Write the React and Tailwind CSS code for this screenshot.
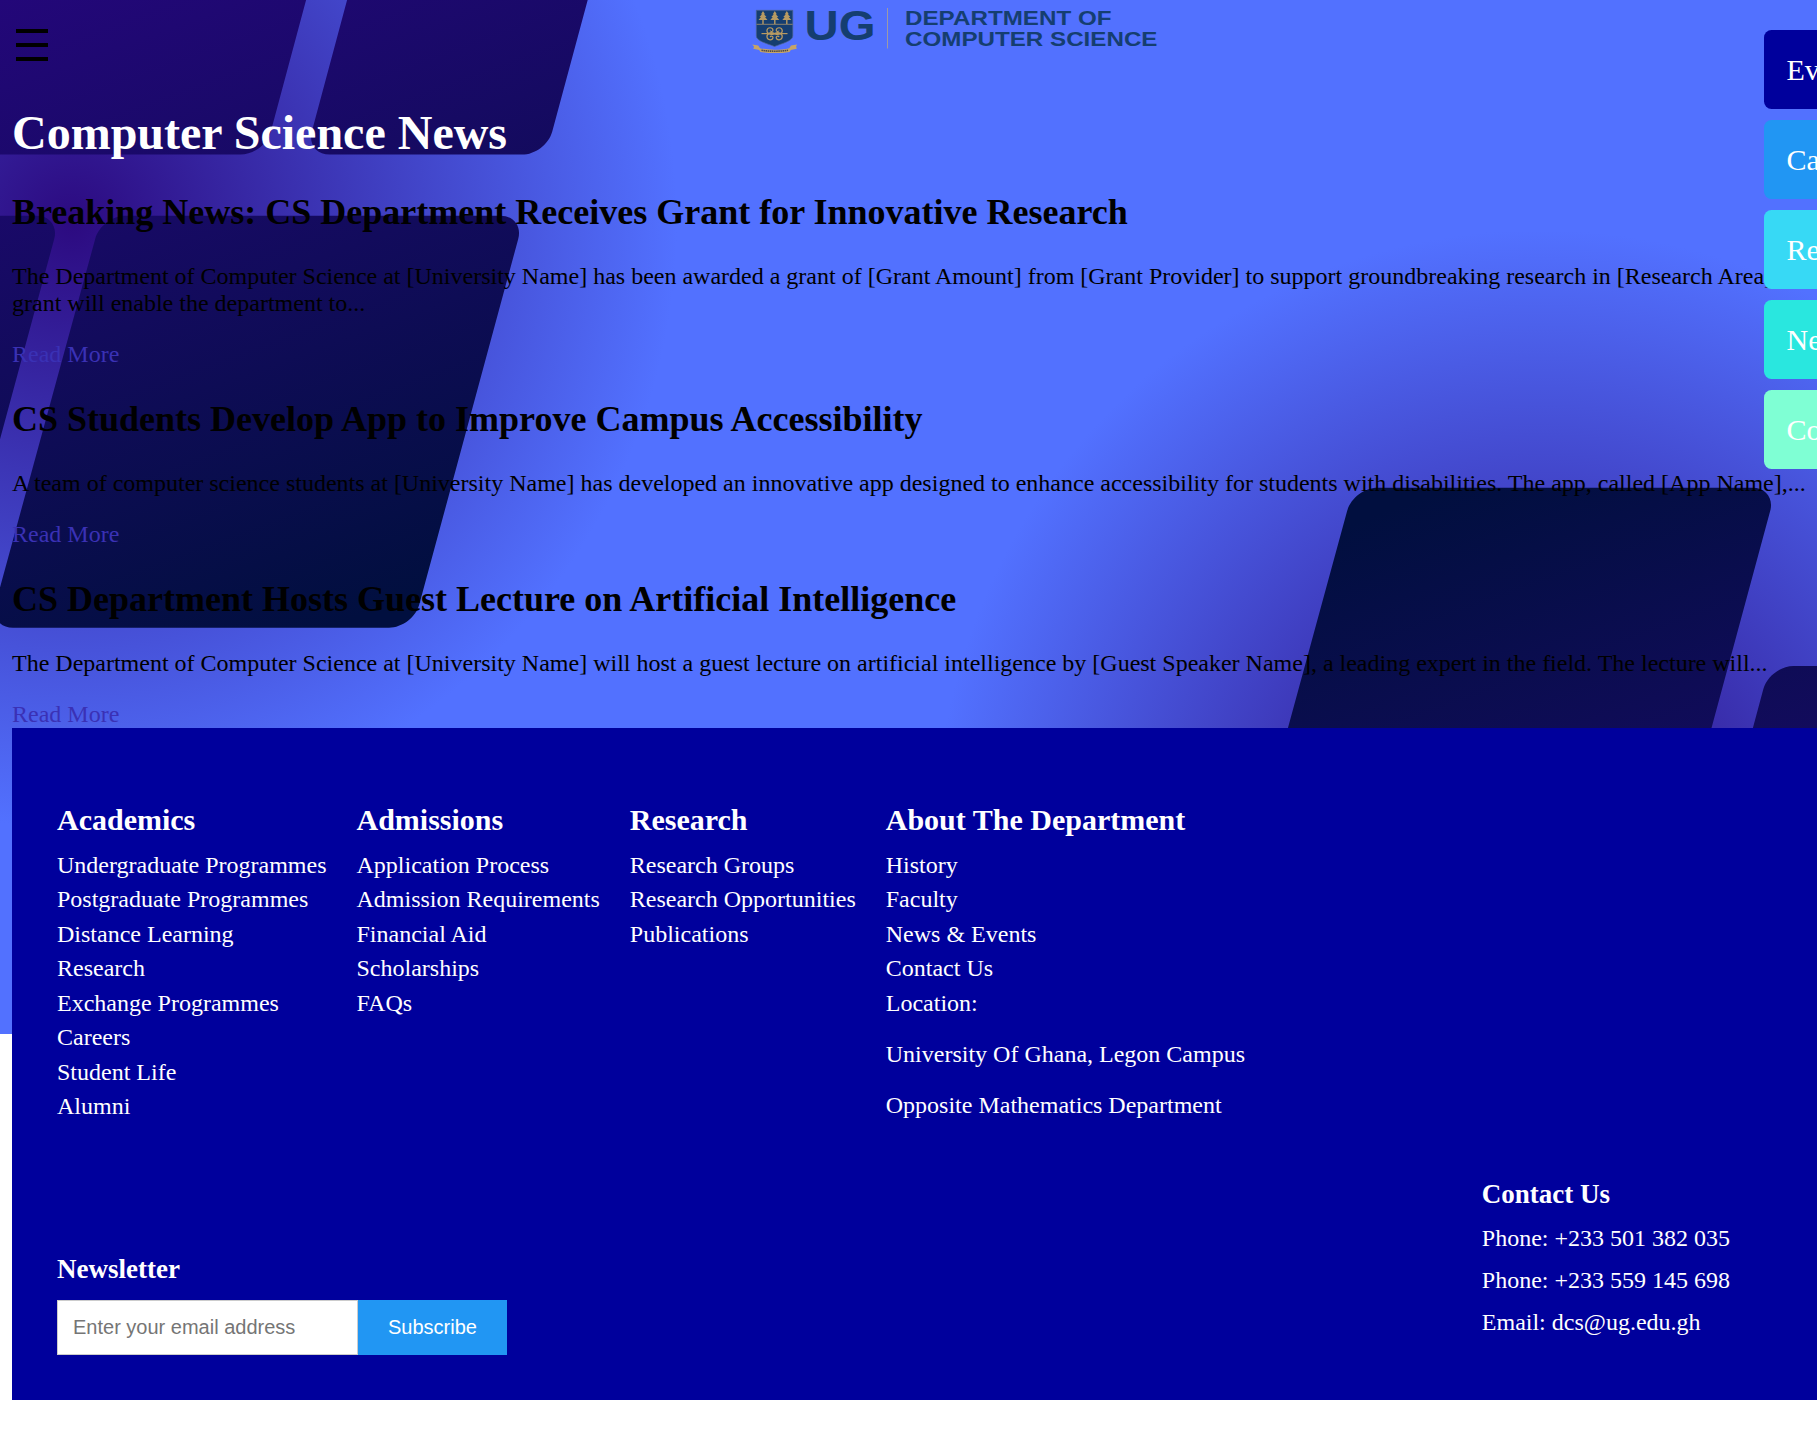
import React from 'react';

const NEWS = [
  {
    title: 'Breaking News: CS Department Receives Grant for Innovative Research',
    lines: [
      'The Department of Computer Science at [University Name] has been awarded a grant of [Grant Amount] from [Grant Provider] to support groundbreaking research in [Research Area].',
      'grant will enable the department to...',
    ],
  },
  {
    title: 'CS Students Develop App to Improve Campus Accessibility',
    lines: [
      'A team of computer science students at [University Name] has developed an innovative app designed to enhance accessibility for students with disabilities. The app, called [App Name],...',
    ],
  },
  {
    title: 'CS Department Hosts Guest Lecture on Artificial Intelligence',
    lines: [
      'The Department of Computer Science at [University Name] will host a guest lecture on artificial intelligence by [Guest Speaker Name], a leading expert in the field. The lecture will...',
    ],
  },
];

const COLUMNS = [
  {
    title: 'Academics',
    links: ['Undergraduate Programmes', 'Postgraduate Programmes', 'Distance Learning', 'Research', 'Exchange Programmes', 'Careers', 'Student Life', 'Alumni'],
  },
  { title: 'Admissions', links: ['Application Process', 'Admission Requirements', 'Financial Aid', 'Scholarships', 'FAQs'] },
  { title: 'Research', links: ['Research Groups', 'Research Opportunities', 'Publications'] },
  {
    title: 'About The Department',
    links: ['History', 'Faculty', 'News & Events', 'Contact Us', 'Location:'],
    notes: ['University Of Ghana, Legon Campus', 'Opposite Mathematics Department'],
  },
];

const TABS = [
  { label: 'Ev', color: 'bg-[#00009c]' },
  { label: 'Ca', color: 'bg-[#2196f3]' },
  { label: 'Re', color: 'bg-[#37d9f5]' },
  { label: 'Ne', color: 'bg-[#29e7df]' },
  { label: 'Co', color: 'bg-[#7fffd4]' },
];

// Closed path through the points; every corner is eased over the same length t on both sides.
function roundedPath(points, t = 24) {
  const n = points.length;
  const k = t * 0.448;
  const parts = points.map(([x, y], i) => {
    const [px, py] = points[(i + n - 1) % n];
    const [nx, ny] = points[(i + 1) % n];
    const la = Math.hypot(px - x, py - y);
    const lb = Math.hypot(nx - x, ny - y);
    const ax = (px - x) / la, ay = (py - y) / la;
    const bx = (nx - x) / lb, by = (ny - y) / lb;
    return `${i ? 'L' : 'M'}${x + ax * t} ${y + ay * t}C${x + ax * k} ${y + ay * k} ${x + bx * k} ${y + by * k} ${x + bx * t} ${y + by * t}`;
  });
  return parts.join('') + 'Z';
}

const PANELS = [
  [[-200, -268], [378, -268], [264.6, 154.6], [-300, 154.6]],
  [[419, -268], [660, -268], [546, 154.6], [305.6, 154.6]],
  [[101.5, 215.8], [524.5, 215.8], [413, 627.7], [-11, 627.7]],
  [[-300, 215.8], [60.5, 215.8], [-51, 627.7], [-410, 627.7]],
  [[1353.5, 487.7], [1776.5, 487.7], [1665, 900], [1241, 900]],
  [[1769.5, 666], [2190, 666], [2080, 1078], [1659, 1078]],
];

function Backdrop() {
  return (
    <svg className="absolute top-0 left-0" width="1817" height="1034" viewBox="0 0 1817 1034" aria-hidden="true">
      <defs>
        <radialGradient id="glowA" gradientUnits="userSpaceOnUse" cx="72" cy="222" r="605">
          <stop offset="0" stopColor="#2c0a80" />
          <stop offset="1" stopColor="#5271ff" />
        </radialGradient>
        <radialGradient id="glowB" gradientUnits="userSpaceOnUse" cx="1540" cy="834" r="604">
          <stop offset="0" stopColor="#2c0a80" />
          <stop offset="1" stopColor="#5271ff" />
        </radialGradient>
        <linearGradient id="panelA" gradientUnits="userSpaceOnUse" x1="0" y1="0" x2="240" y2="660">
          <stop offset="0" stopColor="#230779" />
          <stop offset="1" stopColor="#010f3f" />
        </linearGradient>
        <linearGradient id="panelB" gradientUnits="userSpaceOnUse" x1="1390" y1="510" x2="1630" y2="1170">
          <stop offset="0" stopColor="#010f3f" />
          <stop offset="1" stopColor="#230779" />
        </linearGradient>
      </defs>
      <rect width="1817" height="1034" fill="#5271ff" />
      <rect width="900" height="1034" fill="url(#glowA)" />
      <rect x="900" width="917" height="1034" fill="url(#glowB)" />
      {PANELS.map((p, i) => (
        <path key={i} d={roundedPath(p)} fill={i < 4 ? 'url(#panelA)' : 'url(#panelB)'} />
      ))}
    </svg>
  );
}

function Logo() {
  return (
    <svg width="410" height="56" viewBox="752 0 410 56" className="ml-[704px] shrink-0" aria-label="UG Department of Computer Science">
      <path d="M756.3 10.3H792.8V36C792.8 41 782 43.5 774.5 46.5C767 43.5 756.3 41 756.3 36Z" fill="#153e70" stroke="#4f6490" strokeWidth=".7" />
      <path d="M756.5 24.3H792.6" stroke="#8c846f" strokeWidth="1" />
      {[763, 774.8, 786.8].map((x) => (
        <g key={x} fill="#b89b62">
          <path d={`M${x} 11l2 3.2h-1l2.5 2.8h-1.5l2.5 3h-9l2.5-3h-1.5l2.5-2.8h-1z`} />
          <path d={`M${x - 0.7} 20h1.4v4h-1.4z`} />
        </g>
      ))}
      <g fill="none" stroke="#b89b62" strokeWidth="1.2">
        <path d="M761.5 33.6H787.5" />
        <path d="M774.6 33.6C770 36 766.5 33 767 30.2C767.6 27 772.5 27 773 30C773 31.8 770.5 32 770.2 30.5" />
        <path d="M774.6 33.6C779.2 36 782.7 33 782.2 30.2C781.6 27 776.7 27 776.2 30C776.2 31.8 778.7 32 779 30.5" />
        <path d="M774.6 33.6C770 31.2 766.5 34.2 767 37.2C767.6 40.6 772.5 40.6 773 37.6C773 35.8 770.5 35.6 770.2 37.1" />
        <path d="M774.6 33.6C779.2 31.2 782.7 34.2 782.2 37.2C781.6 40.6 776.7 40.6 776.2 37.6C776.2 35.8 778.7 35.6 779 37.1" />
      </g>
      <path d="M752.2 44.6l6 .8 1.8 2.8c9 2 20 2 29.2 0l1.8-2.8 6-.8-.9 2 .7 2.2-6 1.2-1.2 1.9c-9 1.6-20 1.6-29.2 0l-1.2-1.9-6-1.2.9-2z" fill="#c6a467" />
      <path d="M761.5 50.3c8 1.2 18 1.2 26.5 0" fill="none" stroke="#4b4a48" strokeWidth="1.6" strokeDasharray="1.5 .6" />
      <g fill="#153e70" fontFamily="'Liberation Sans', Arial, sans-serif" fontWeight="700">
        <text x="804.5" y="39.8" fontSize="43" textLength="71" lengthAdjust="spacingAndGlyphs">UG</text>
        <text x="905" y="25" fontSize="21" textLength="206.5" lengthAdjust="spacingAndGlyphs">DEPARTMENT OF</text>
        <text x="905" y="46.2" fontSize="21" textLength="252.5" lengthAdjust="spacingAndGlyphs">COMPUTER SCIENCE</text>
      </g>
      <path d="M887.5 8V48.5" stroke="#9c9aa8" strokeWidth="1" />
    </svg>
  );
}

export default function App() {
  return (
    <div className="relative h-[1439px] w-full overflow-hidden bg-white font-['Liberation_Serif','Times_New_Roman',serif] text-[24px] leading-[27px] text-black">
      <Backdrop />

      <div className="relative">
        <header className="flex h-[105px] items-start pl-4">
          <button className="mt-[29px] flex w-8 shrink-0 flex-col gap-[10px]" aria-label="Open menu">
            <span className="block h-1 w-8 bg-black" />
            <span className="block h-1 w-8 bg-black" />
            <span className="block h-1 w-8 bg-black" />
          </button>
          <Logo />
        </header>

        <main className="h-[623px] pl-3">
          <h1 className="text-[48px] leading-[55px] font-bold text-white">Computer Science News</h1>
          <div className="mt-[31.4px] flex flex-col gap-[30.5px]">
            {NEWS.map((item) => (
              <article key={item.title}>
                <h2 className="mb-[29.5px] text-[36px] leading-[42px] font-bold">{item.title}</h2>
                <div className="mb-6">
                  {item.lines.map((line) => (
                    <p key={line} className="whitespace-nowrap">{line}</p>
                  ))}
                </div>
                <a className="block text-[#3a31b5]">Read More</a>
              </article>
            ))}
          </div>
        </main>

        <footer className="ml-3 h-[672px] bg-[#00009c] pt-[75px] pl-[45px] text-white">
          <div className="flex h-[376px] gap-[30px]">
            {COLUMNS.map((col) => (
              <section key={col.title}>
                <h3 className="mb-[10.8px] text-[30px] leading-[34px] font-bold">{col.title}</h3>
                <ul className="leading-[34.5px]">
                  {col.links.map((l) => (
                    <li key={l}>{l}</li>
                  ))}
                </ul>
                {col.notes && (
                  <div className="mt-[20.6px] flex flex-col gap-6">
                    {col.notes.map((n) => (
                      <p key={n}>{n}</p>
                    ))}
                  </div>
                )}
              </section>
            ))}
          </div>
          <div className="flex items-start justify-between pr-[87px]">
            <form className="mt-[75px]">
              <h4 className="mb-[15px] text-[27px] leading-[31px] font-bold">Newsletter</h4>
              <div className="flex h-[55px] font-['Liberation_Sans',Arial,sans-serif] text-[20px]">
                <input
                  className="w-[301px] border border-[#cccccc] bg-white px-[15px] placeholder:text-[#757575]"
                  placeholder="Enter your email address"
                />
                <button type="button" className="w-[149px] bg-[#2196f3] text-white">Subscribe</button>
              </div>
            </form>
            <address className="flex flex-col gap-[15px] not-italic">
              <h4 className="text-[27px] leading-[31px] font-bold">Contact Us</h4>
              <p>Phone: +233 501 382 035</p>
              <p>Phone: +233 559 145 698</p>
              <p>Email: dcs@ug.edu.gh</p>
            </address>
          </div>
        </footer>
      </div>

      <nav className="absolute top-[30px] right-0 flex w-[53px] flex-col gap-[11px] overflow-hidden">
        {TABS.map((t) => (
          <a key={t.label} className={`flex h-[79px] items-center rounded-l-[7.5px] pl-[22.5px] text-[30px] leading-[34px] text-white ${t.color}`}>
            {t.label}
          </a>
        ))}
      </nav>
    </div>
  );
}
